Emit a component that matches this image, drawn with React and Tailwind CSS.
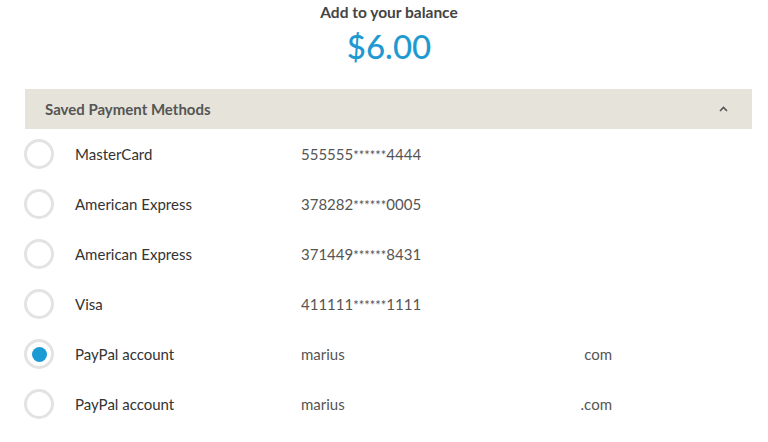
import React from 'react';

const methods = [
  { name: 'MasterCard', pre: '555555', post: '4444' },
  { name: 'American Express', pre: '378282', post: '0005' },
  { name: 'American Express', pre: '371449', post: '8431' },
  { name: 'Visa', pre: '411111', post: '1111' },
  { name: 'PayPal account', email: ['marius', 'com'], selected: true },
  { name: 'PayPal account', email: ['marius', '.com'] },
];

const Radio = ({ checked }) => (
  <div className="flex h-[30px] w-[30px] items-center justify-center rounded-full border-[3px] border-[#e3e3e3] bg-white">
    {checked && <div className="h-[15px] w-[15px] rounded-full bg-[#1b9ad3]" />}
  </div>
);

const App = () => {
  return (
    <div className="min-h-screen bg-white font-['Lato','Open_Sans',sans-serif] text-[#333]">
      <div className="flex flex-col items-center pl-[10px] pt-[2px]">
        <div className="text-[15.5px] font-bold leading-[20px] text-[#444]">Add to your balance</div>
        <div className="mt-[4px] text-[33px] font-medium leading-[40px] text-[#1f9ad0]">$6.00</div>
      </div>

      <div className="mx-[25px] mt-[23px] w-[727px]">
        <div className="flex h-[40px] items-center justify-between bg-[#e6e4da] pl-[20px] pr-[24px]">
          <span className="text-[15px] font-bold text-[#555]">Saved Payment Methods</span>
          <svg width="9" height="6" viewBox="0 0 9 6" fill="none">
            <path d="M1 5 L4.5 1.5 L8 5" stroke="#555" strokeWidth="1.6" />
          </svg>
        </div>

        <div>
          {methods.map((m, i) => (
            <div key={i} className="flex h-[50px] items-center">
              <div className="-ml-[1px]">
                <Radio checked={m.selected} />
              </div>
              <div className="ml-[21px] w-[226px] text-[15px] text-[#333]">{m.name}</div>
              {m.email ? (
                <div className="flex w-[311px] items-center justify-between text-[15px] text-[#555]">
                  <span>{m.email[0]}</span>
                  <span>{m.email[1]}</span>
                </div>
              ) : (
                <div className="text-[15px] text-[#555]">
                  {m.pre}
                  <span className="text-[13px]">******</span>
                  {m.post}
                </div>
              )}
            </div>
          ))}
        </div>
      </div>
    </div>
  );
};

export default App;
